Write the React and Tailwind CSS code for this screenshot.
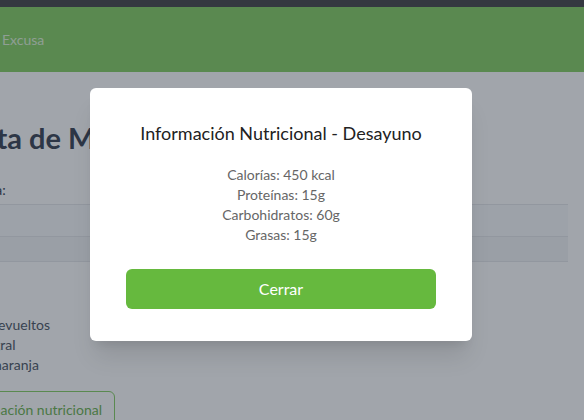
export default function App() {
  return (
    <div className="relative h-[420px] w-[584px] overflow-hidden bg-white font-['Lato',sans-serif]">
      <div className="h-[7px] bg-[#444448]" />
      <nav className="flex h-[65px] items-center bg-[#85cf62] pl-[2px]">
        <span className="text-[14px] text-white/75">Excusa</span>
      </nav>
      <main className="pr-4">
        <h1 className="-ml-[48px] mt-[49px] whitespace-nowrap text-[29px] font-bold leading-[34px] text-[#374151]">Dieta de Mi Semana</h1>
        <label className="-ml-[34px] mt-[25px] block text-[14px] leading-[20px] text-[#374151]">Fecha:</label>
        <div className="mt-[4px] h-[33px] border-y border-[#e5e7eb] bg-[#f9fafb]" />
        <div className="h-[25px] border-b border-[#e5e7eb] bg-[#f3f4f6]" />
        <ul className="-ml-[57px] mt-[53px] text-[14px] leading-[20px] text-[#4b5563]">
          <li>Huevos revueltos</li>
          <li>Pan integral</li>
          <li>Jugo de naranja</li>
        </ul>
        <button className="-ml-[77px] mt-[16px] h-[36px] rounded-md border border-[#85cf62] px-3 text-[14px] text-[#6bb24e]">Ver información nutricional</button>
      </main>
      <div className="absolute inset-0 bg-[rgba(31,41,55,0.42)]">
        <div className="ml-[90px] mt-[88px] w-[382px] rounded-md bg-white px-9 pb-[32px] pt-[31px] text-center shadow-xl">
          <h2 className="text-[18px] leading-[28px] text-[#222222]">Información Nutricional - Desayuno</h2>
          <div className="mt-[18px] text-[14px] leading-[20px] text-[#666666]">
            <p>Calorías: 450 kcal</p>
            <p>Proteínas: 15g</p>
            <p>Carbohidratos: 60g</p>
            <p>Grasas: 15g</p>
          </div>
          <button className="mt-[24px] h-[40px] w-full rounded-md bg-[#66b93e] text-[16px] text-white">Cerrar</button>
        </div>
      </div>
    </div>
  );
}
